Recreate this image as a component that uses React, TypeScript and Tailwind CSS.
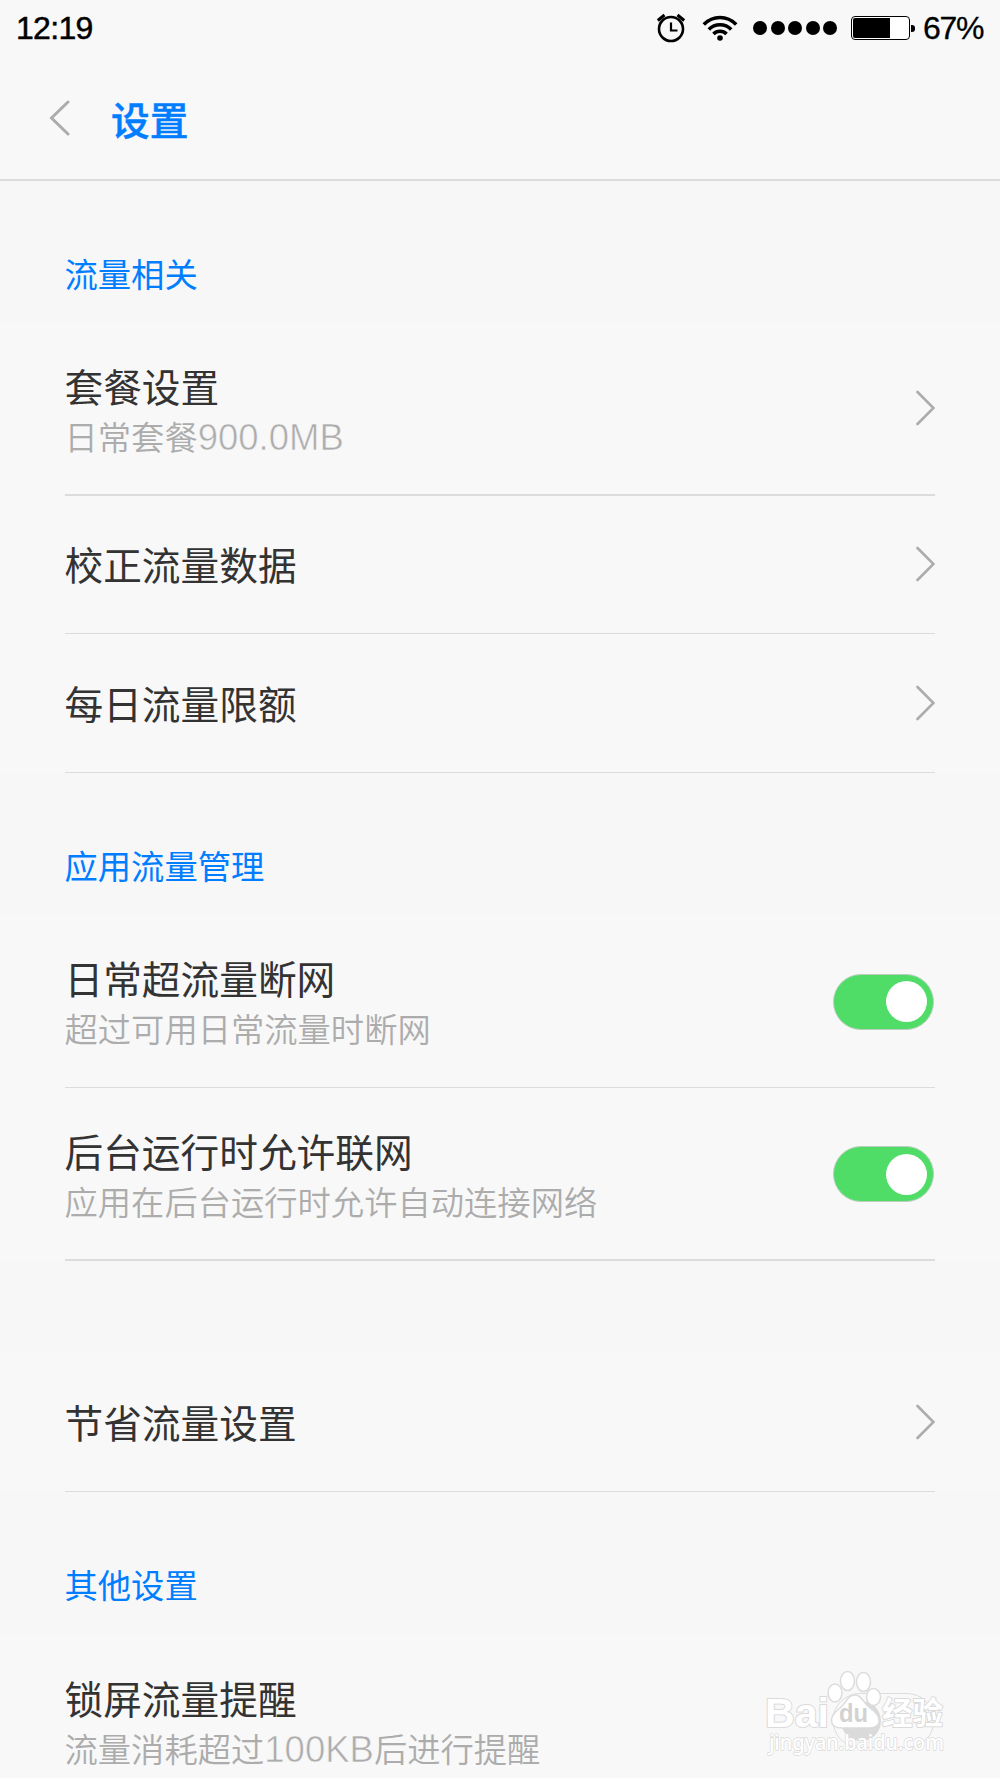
import React from "react";

const CJK = "font-['Noto_Sans_CJK_SC',sans-serif]";

function StatusBar() {
  return (
    <div className="flex h-[56px] items-center pl-[16px] pr-[17px] font-['Liberation_Sans',sans-serif] text-[32px] leading-[56px] text-black">
      <span className="mr-auto tracking-[-0.7px] [-webkit-text-stroke:0.5px_black]">12:19</span>
      <svg width="30" height="30" viewBox="0 0 30 30" fill="none" stroke="black" strokeWidth="2.6">
        <circle cx="15" cy="16" r="12" />
        <path d="M15 9.5V17.5H21.5" strokeWidth="2.2" />
        <path d="M1.8 7.5L8.5 2M28.2 7.5L21.5 2" strokeWidth="3" />
      </svg>
      <svg className="ml-[16px]" width="36" height="28" viewBox="0 0 36 28" fill="none" stroke="black" strokeWidth="3.6">
        <path d="M1.8 10.5C11 1.2 25 1.2 34.2 10.5" />
        <path d="M6.8 15.5C13 9.2 23 9.2 29.2 15.5" />
        <path d="M11.5 20C15 16.4 21 16.4 24.5 20" />
        <circle cx="18" cy="24" r="2.8" fill="black" stroke="none" />
      </svg>
      <div className="ml-[15px] flex gap-[3.5px]">
        {[0, 1, 2, 3, 4].map((i) => (
          <span key={i} className="size-[14px] rounded-full bg-black" />
        ))}
      </div>
      <div className="ml-[14px] flex h-[24px] w-[59px] rounded-[4px] border border-black bg-white p-px">
        <div className="w-[37px] rounded-l-[2px] bg-black" />
      </div>
      <div className="ml-px h-[7px] w-[4px] rounded-r-[3px] bg-black" />
      <span className="ml-[8px] w-[60px] tracking-[-1.3px] [-webkit-text-stroke:0.3px_black]">67%</span>
    </div>
  );
}

function Chevron() {
  return (
    <svg className="mb-px" width="20" height="36" viewBox="0 0 20 36" fill="none" stroke="#acacac" strokeWidth="2.6" strokeLinecap="round">
      <path d="M2.500 2L18.500 18L2.500 34" />
    </svg>
  );
}

function Toggle() {
  return (
    <div className="mt-px mr-px flex h-[56px] w-[101px] items-center justify-end rounded-full border border-[#bccfbe] bg-[#4fdc67] pr-[6px]">
      <div className="size-[41px] rounded-full bg-white" />
    </div>
  );
}

function SectionTitle({ children }: { children: string }) {
  return (
    <h2 className="h-[142px] bg-[#f7f7f7] px-[64.5px] pt-[67px] text-[33.3px] leading-[50px] text-[#007eff]">
      {children}
    </h2>
  );
}

type RowProps = {
  title: string;
  sub?: React.ReactNode;
  control?: React.ReactNode;
  className: string;
};

function Row({ title, sub, control, className }: RowProps) {
  return (
    <div className={`mx-[65px] flex items-center justify-between border-[#dcdcdc] ${className}`}>
      <div className="-ml-[0.5px] pb-[3px]">
        <div className="text-[38.7px] leading-[56px] text-[#333]">{title}</div>
        {sub && <div className="pt-px text-[33.3px] font-[350] leading-[44px] text-[#acacac]">{sub}</div>}
      </div>
      {control}
    </div>
  );
}

function Latin({ children }: { children: string }) {
  return (
    <span className="font-['Liberation_Sans',sans-serif] text-[36.5px] leading-none [-webkit-text-stroke:0.6px_#f8f8f8]">
      {children}
    </span>
  );
}

function Watermark() {
  return (
    <svg className="absolute left-[760px] top-[1664px]" width="200" height="100" viewBox="0 0 200 100">
      <rect x="73" y="29.500" width="101" height="54" rx="27" fill="#f9f9f9" stroke="#dddddd" />
      <circle cx="101" cy="57" r="20" fill="#dadada" />
      <g fill="#fff" stroke="#dcdcdc" strokeWidth="1.500">
        <ellipse cx="75" cy="29" rx="7" ry="9" />
        <ellipse cx="87.500" cy="17" rx="7" ry="9.500" />
        <ellipse cx="103.500" cy="18" rx="7" ry="9.500" />
        <ellipse cx="113.500" cy="33" rx="7" ry="8.500" />
        <path d="M95 31C102 31 103 39 110 44C124 54 121 64 108 64H82C69 64 68 53 79 45C87 39 87 31 95 31Z" />
      </g>
      <g fill="#fff" stroke="#dadada" strokeWidth="2" paintOrder="stroke" strokeLinejoin="round" fontWeight="bold">
        <text x="5" y="62.500" fontSize="41" fontFamily="Liberation Sans, sans-serif" textLength="64" lengthAdjust="spacingAndGlyphs">Bai</text>
        <text x="122" y="60" fontSize="30.500" fontFamily="Noto Sans CJK SC, sans-serif">经验</text>
        <text x="9" y="86" fontSize="22" strokeWidth="1.500" fontFamily="Noto Sans, sans-serif" fontWeight="500" textLength="175" lengthAdjust="spacingAndGlyphs">jingyan.baidu.com</text>
      </g>
      <text x="79" y="58" fontSize="25" fill="#d2d2d2" fontFamily="Liberation Sans, sans-serif" fontWeight="bold" textLength="29" lengthAdjust="spacingAndGlyphs">du</text>
    </svg>
  );
}

export default function App() {
  return (
    <div className={`relative h-[1778px] w-[1000px] overflow-hidden bg-[#f8f8f8] ${CJK}`}>
      <StatusBar />
      <header className="flex h-[125px] items-center border-b-2 border-[#dcdcdc] pl-[49px]">
        <svg className="mt-px" width="21" height="36" viewBox="0 0 21 36" fill="none" stroke="#acacac" strokeWidth="3" strokeLinecap="round">
          <path d="M19 2L2.500 18L19 34" />
        </svg>
        <h1 className="ml-[41px] text-[38.7px] font-medium leading-[56px] text-[#007eff] [-webkit-text-stroke:0.5px_#007eff]">设置</h1>
      </header>

      <SectionTitle>流量相关</SectionTitle>
      <Row title="套餐设置" sub={<>日常套餐<Latin>900.0MB</Latin></>} control={<Chevron />} className="h-[173px] border-b-2" />
      <Row title="校正流量数据" control={<Chevron />} className="h-[138px] border-b" />
      <Row title="每日流量限额" control={<Chevron />} className="h-[139px] border-b" />

      <SectionTitle>应用流量管理</SectionTitle>
      <Row title="日常超流量断网" sub="超过可用日常流量时断网" control={<Toggle />} className="h-[173px] border-b" />
      <Row title="后台运行时允许联网" sub="应用在后台运行时允许自动连接网络" control={<Toggle />} className="h-[173px] border-b-2" />

      <div className="h-[92px] bg-[#f7f7f7]" />
      <Row title="节省流量设置" control={<Chevron />} className="h-[139px] border-b" />

      <SectionTitle>其他设置</SectionTitle>
      <Row title="锁屏流量提醒" sub={<>流量消耗超过<Latin>100KB</Latin>后进行提醒</>} className="h-[173px]" />
      <Watermark />
    </div>
  );
}
